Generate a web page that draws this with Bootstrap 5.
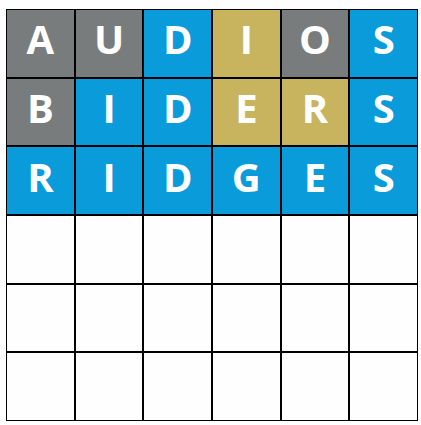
<!DOCTYPE html>
<html lang="en">
<head>
<meta charset="utf-8">
<meta name="viewport" content="width=device-width, initial-scale=1">
<title>Word grid</title>
<link href="https://cdn.jsdelivr.net/npm/bootstrap@5.3.0/dist/css/bootstrap.min.css" rel="stylesheet">
<style>
  body { background: #fefefe; font-family: "Open Sans", "Noto Sans", sans-serif; }
  .board { padding: 9px 3px 4px 6px; }
  .tile {
    aspect-ratio: 1;
    border: 1px solid #000;
    padding-bottom: 8px;
    color: #fff;
    font-size: 40px;
    line-height: 48px;
  }
  .absent { background: #787c7d; }
  .present { background: #c8b45f; }
  .correct { background: #0a9bdb; }
</style>
</head>
<body>
<main class="board" role="grid" aria-label="Guesses">
  <div class="row g-0" role="row">
    <div class="col tile absent d-flex align-items-center justify-content-center fw-bold" role="gridcell">A</div>
    <div class="col tile absent d-flex align-items-center justify-content-center fw-bold" role="gridcell">U</div>
    <div class="col tile correct d-flex align-items-center justify-content-center fw-bold" role="gridcell">D</div>
    <div class="col tile present d-flex align-items-center justify-content-center fw-bold" role="gridcell">I</div>
    <div class="col tile absent d-flex align-items-center justify-content-center fw-bold" role="gridcell">O</div>
    <div class="col tile correct d-flex align-items-center justify-content-center fw-bold" role="gridcell">S</div>
  </div>
  <div class="row g-0" role="row">
    <div class="col tile absent d-flex align-items-center justify-content-center fw-bold" role="gridcell">B</div>
    <div class="col tile correct d-flex align-items-center justify-content-center fw-bold" role="gridcell">I</div>
    <div class="col tile correct d-flex align-items-center justify-content-center fw-bold" role="gridcell">D</div>
    <div class="col tile present d-flex align-items-center justify-content-center fw-bold" role="gridcell">E</div>
    <div class="col tile present d-flex align-items-center justify-content-center fw-bold" role="gridcell">R</div>
    <div class="col tile correct d-flex align-items-center justify-content-center fw-bold" role="gridcell">S</div>
  </div>
  <div class="row g-0" role="row">
    <div class="col tile correct d-flex align-items-center justify-content-center fw-bold" role="gridcell">R</div>
    <div class="col tile correct d-flex align-items-center justify-content-center fw-bold" role="gridcell">I</div>
    <div class="col tile correct d-flex align-items-center justify-content-center fw-bold" role="gridcell">D</div>
    <div class="col tile correct d-flex align-items-center justify-content-center fw-bold" role="gridcell">G</div>
    <div class="col tile correct d-flex align-items-center justify-content-center fw-bold" role="gridcell">E</div>
    <div class="col tile correct d-flex align-items-center justify-content-center fw-bold" role="gridcell">S</div>
  </div>
  <div class="row g-0" role="row">
    <div class="col tile" role="gridcell"></div><div class="col tile" role="gridcell"></div><div class="col tile" role="gridcell"></div>
    <div class="col tile" role="gridcell"></div><div class="col tile" role="gridcell"></div><div class="col tile" role="gridcell"></div>
  </div>
  <div class="row g-0" role="row">
    <div class="col tile" role="gridcell"></div><div class="col tile" role="gridcell"></div><div class="col tile" role="gridcell"></div>
    <div class="col tile" role="gridcell"></div><div class="col tile" role="gridcell"></div><div class="col tile" role="gridcell"></div>
  </div>
  <div class="row g-0" role="row">
    <div class="col tile" role="gridcell"></div><div class="col tile" role="gridcell"></div><div class="col tile" role="gridcell"></div>
    <div class="col tile" role="gridcell"></div><div class="col tile" role="gridcell"></div><div class="col tile" role="gridcell"></div>
  </div>
</main>
<script src="https://cdn.jsdelivr.net/npm/bootstrap@5.3.0/dist/js/bootstrap.bundle.min.js"></script>
</body>
</html>
